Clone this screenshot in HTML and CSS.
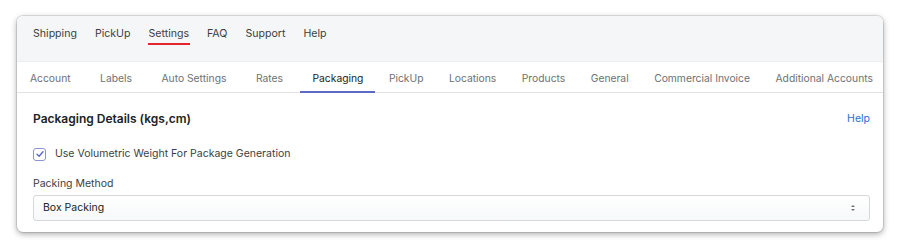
FILE: index.html
```html
<!DOCTYPE html>
<html lang="en">
<head>
    <meta charset="UTF-8">
    <meta name="viewport" content="width=device-width, initial-scale=1.0">
    <title>Settings</title>
    <link rel="stylesheet" href="styles.css">
</head>
<body>
<div class="card">
    <nav class="top-nav">
        <a href="#">Shipping</a>
        <a href="#">PickUp</a>
        <a href="#" class="active">Settings</a>
        <a href="#">FAQ</a>
        <a href="#">Support</a>
        <a href="#">Help</a>
    </nav>
    <div class="tabs">
        <a href="#" class="wide">Account</a>
        <a href="#" class="wide">Labels</a>
        <a href="#" class="wide">Auto Settings</a>
        <a href="#" class="wide">Rates</a>
        <a href="#" class="active">Packaging</a>
        <a href="#">PickUp</a>
        <a href="#">Locations</a>
        <a href="#">Products</a>
        <a href="#">General</a>
        <a href="#">Commercial Invoice</a>
        <a href="#">Additional Accounts</a>
    </div>
    <div class="content">
        <div class="section-head">
            <h2>Packaging Details (kgs,cm)</h2>
            <a href="#" class="help">Help</a>
        </div>
        <label class="check">
            <span class="box">
                <svg width="10" height="10" viewBox="0 0 10 10"><path d="M2 5.2 L4.1 7.2 L8 2.8" fill="none" stroke="#5c6ac4" stroke-width="1.4" stroke-linecap="round" stroke-linejoin="round"/></svg>
            </span>
            Use Volumetric Weight For Package Generation
        </label>
        <div class="field-label">Packing Method</div>
        <div class="select">
            <span>Box Packing</span>
            <svg width="8" height="10" viewBox="0 0 8 10"><path d="M2 4 L4 2 L6 4 Z M2 6 L4 8 L6 6 Z" fill="#6d7175"/></svg>
        </div>
    </div>
</div>
</body>
</html>
```

FILE: styles.css
```css
body {
    margin: 0;
    padding: 16px 17px;
    background-color: #fff;
    font-family: Inter, "Noto Sans", sans-serif;
    font-size: 10.5px;
    line-height: 14px;
    color: #202223;
}
a {
    text-decoration: none;
    color: inherit;
}
.card {
    height: 216px;
    box-sizing: border-box;
    background-color: #fff;
    border-radius: 6px;
    box-shadow: 0 0 0 1px rgba(0,0,0,0.1), 0 2px 6px rgba(0,0,0,0.35);
    overflow: hidden;
}
.top-nav {
    display: flex;
    height: 46px;
    padding: 0 0 0 16px;
    background-color: #f5f6f8;
    border-bottom: 1px solid #eceef0;
    box-sizing: border-box;
    font-size: 10.6px;
}
.top-nav a {
    margin-right: 18px;
    padding-top: 11px;
    color: #3b3e42;
    white-space: nowrap;
}
.top-nav a.active {
    position: relative;
}
.top-nav a.active::after {
    content: "";
    position: absolute;
    left: -1px;
    right: -1px;
    top: 27px;
    height: 2px;
    background-color: #e3262b;
}
.tabs {
    display: flex;
    height: 31px;
    border-bottom: 1px solid #e1e3e5;
    box-sizing: border-box;
    padding: 0 1px;
    font-size: 10.3px;
}
.tabs a {
    padding: 9px 12px 0;
    margin-right: 1.5px;
    color: #6d7175;
    border-bottom: 2px solid transparent;
    margin-bottom: -1px;
    white-space: nowrap;
}
.tabs a.wide {
    margin-right: 5.5px;
}
.tabs a.active {
    color: #202223;
    border-bottom-color: #5c6ac4;
}
.content {
    padding: 18px 13px 0 16px;
}
.section-head {
    display: flex;
    justify-content: space-between;
    align-items: center;
    line-height: 16px;
}
.section-head h2 {
    margin: 0;
    font-size: 12px;
    font-weight: 600;
}
.help {
    color: #2c6ecb;
    font-size: 10.5px;
}
.check {
    display: flex;
    align-items: center;
    margin-top: 20px;
    color: #3b3e42;
}
.box {
    display: flex;
    align-items: center;
    justify-content: center;
    width: 11px;
    height: 11px;
    border: 1px solid #8c93d4;
    border-radius: 3px;
    margin-right: 9px;
}
.field-label {
    margin-top: 16px;
    color: #3b3e42;
}
.select {
    display: flex;
    justify-content: space-between;
    align-items: center;
    height: 26px;
    box-sizing: border-box;
    margin-top: 4px;
    padding: 0 12px 0 9px;
    border: 1px solid #d5d7da;
    border-radius: 3px;
    background: linear-gradient(#fff, #f7f8f9);
}
```
